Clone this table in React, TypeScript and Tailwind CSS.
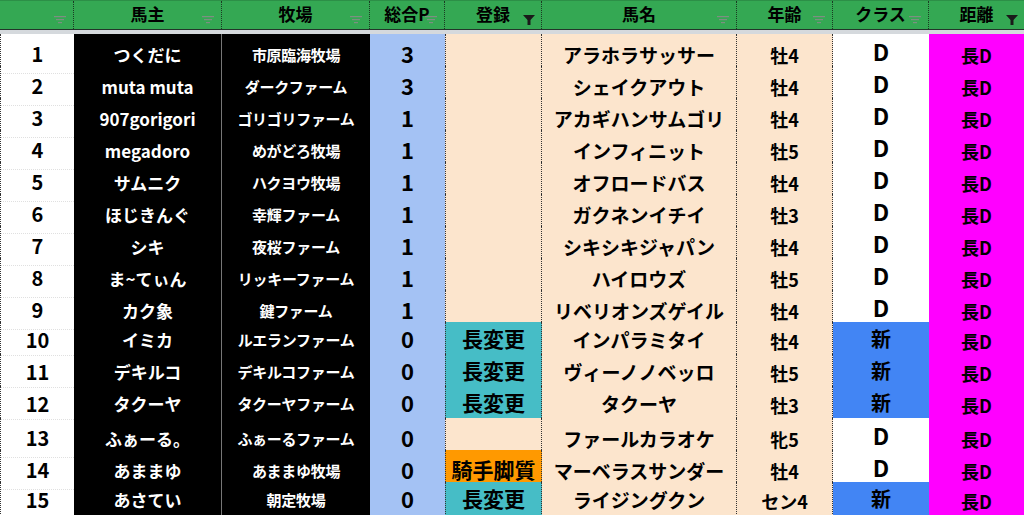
import React from "react";

type Row = {
  no: number;
  owner: string;
  farm: string;
  point: number;
  reg: string;
  horse: string;
  age: string;
  cls: string;
};

const rows: Row[] = [
  { no: 1, owner: "つくだに", farm: "市原臨海牧場", point: 3, reg: "", horse: "アラホラサッサー", age: "牡4", cls: "D" },
  { no: 2, owner: "muta muta", farm: "ダークファーム", point: 3, reg: "", horse: "シェイクアウト", age: "牡4", cls: "D" },
  { no: 3, owner: "907gorigori", farm: "ゴリゴリファーム", point: 1, reg: "", horse: "アカギハンサムゴリ", age: "牡4", cls: "D" },
  { no: 4, owner: "megadoro", farm: "めがどろ牧場", point: 1, reg: "", horse: "インフィニット", age: "牡5", cls: "D" },
  { no: 5, owner: "サムニク", farm: "ハクヨウ牧場", point: 1, reg: "", horse: "オフロードバス", age: "牡4", cls: "D" },
  { no: 6, owner: "ほじきんぐ", farm: "幸輝ファーム", point: 1, reg: "", horse: "ガクネンイチイ", age: "牡3", cls: "D" },
  { no: 7, owner: "シキ", farm: "夜桜ファーム", point: 1, reg: "", horse: "シキシキジャパン", age: "牡4", cls: "D" },
  { no: 8, owner: "ま~てぃん", farm: "リッキーファーム", point: 1, reg: "", horse: "ハイロウズ", age: "牡5", cls: "D" },
  { no: 9, owner: "カク象", farm: "鍵ファーム", point: 1, reg: "", horse: "リベリオンズゲイル", age: "牡4", cls: "D" },
  { no: 10, owner: "イミカ", farm: "ルエランファーム", point: 0, reg: "長変更", horse: "インパラミタイ", age: "牡4", cls: "新" },
  { no: 11, owner: "デキルコ", farm: "デキルコファーム", point: 0, reg: "長変更", horse: "ヴィーノノベッロ", age: "牡5", cls: "新" },
  { no: 12, owner: "タクーヤ", farm: "タクーヤファーム", point: 0, reg: "長変更", horse: "タクーヤ", age: "牡3", cls: "新" },
  { no: 13, owner: "ふぁーる。", farm: "ふぁーるファーム", point: 0, reg: "", horse: "ファールカラオケ", age: "牝5", cls: "D" },
  { no: 14, owner: "あままゆ", farm: "あままゆ牧場", point: 0, reg: "騎手脚質", horse: "マーベラスサンダー", age: "牡4", cls: "D" },
  { no: 15, owner: "あさてい", farm: "朝定牧場", point: 0, reg: "長変更", horse: "ライジングクン", age: "セン4", cls: "新" },
];

const grid = "grid grid-cols-[74px_148px_148px_75px_97px_195px_96px_96px_95px]";
const font = { fontFamily: '"Noto Sans CJK JP", "Noto Sans", sans-serif' };

function FilterIcon({ active }: { active?: boolean }) {
  if (active) {
    return (
      <svg width="12" height="10" viewBox="0 0 12 10" className="absolute right-[6px] top-[14px]">
        <path d="M0 0 H12 L7.5 5 V10 H4.5 V5 Z" fill="#1a1a1a" />
      </svg>
    );
  }
  return (
    <svg width="12" height="8" viewBox="0 0 12 8" className="absolute right-[7px] top-[15px]">
      <rect x="0" y="0" width="12" height="1.2" fill="#7d8f82" />
      <rect x="2" y="3" width="8" height="1.2" fill="#7d8f82" />
      <rect x="4" y="6" width="4" height="1.2" fill="#7d8f82" />
    </svg>
  );
}

function Head({ label, active, last }: { label: string; active?: boolean; last?: boolean }) {
  return (
    <div
      className={`relative flex items-center justify-center pb-[2px] text-[17px] font-bold text-black ${
        last ? "" : "border-r border-dotted border-[#1b3a23]"
      }`}
    >
      {label}
      <FilterIcon active={active} />
    </div>
  );
}

export default function App() {
  return (
    <div className="w-[1024px] h-[515px] overflow-hidden bg-white" style={font}>
      <div className={`${grid} h-[30px] bg-[#34a853] border-t border-[#2c8f47] border-b border-b-[#23352a]`}>
        <Head label="" />
        <Head label="馬主" />
        <Head label="牧場" />
        <Head label="総合P" />
        <Head label="登録" active />
        <Head label="馬名" />
        <Head label="年齢" />
        <Head label="クラス" />
        <Head label="距離" active last />
      </div>
      <div className="h-[4px] bg-[#d5d9dd]" />
      {rows.map((r) => {
        const regBg =
          r.reg === "長変更" ? "bg-[#46bdc6]" : r.reg === "騎手脚質" ? "bg-[#ff9900]" : "bg-[#fce5cd]";
        const isNew = r.cls === "新";
        return (
          <div key={r.no} className={`${grid} h-[32px] font-bold`}>
            <div className="flex items-center justify-center border-l border-dotted border-l-[#333] border-b border-b-[#e0e0e0] text-[20px] text-black pt-[2px]">
              {r.no}
            </div>
            <div className="flex items-center justify-center bg-black text-white border-b border-r border-[#777] text-[17px] pt-[2px] whitespace-nowrap">
              {r.owner}
            </div>
            <div className="flex items-center justify-center bg-black text-white border-b border-[#777] text-[15px] pt-[3px] whitespace-nowrap tracking-[-0.3px]">
              {r.farm}
            </div>
            <div className="flex items-center justify-center bg-[#a4c2f4] border-b border-[#98b6e6] text-[22px] text-black">
              {r.point}
            </div>
            <div
              className={`flex items-center justify-center ${regBg} border-l border-r border-b border-dotted border-[#333] text-black whitespace-nowrap text-[21px]`}
            >
              {r.reg}
            </div>
            <div className="flex items-center justify-center bg-[#fce5cd] border-r border-b border-dotted border-[#333] text-[19px] text-black pt-[3px] whitespace-nowrap">
              {r.horse}
            </div>
            <div className="flex items-center justify-center bg-[#fce5cd] border-r border-b border-dotted border-[#333] text-[18px] text-black pt-[5px]">
              {r.age}
            </div>
            <div
              className={`flex items-center justify-center text-black border-b ${
                isNew
                  ? "bg-[#4285f4] border-[#3b78dc] text-[20px]"
                  : "bg-white border-[#e0e0e0] text-[23px] pb-[4px]"
              }`}
            >
              {r.cls}
            </div>
            <div className="flex items-center justify-center bg-[#ff00ff] border-b border-dotted border-[#5a005a] text-[18px] text-black pt-[5px]">
              長D
            </div>
          </div>
        );
      })}
    </div>
  );
}
